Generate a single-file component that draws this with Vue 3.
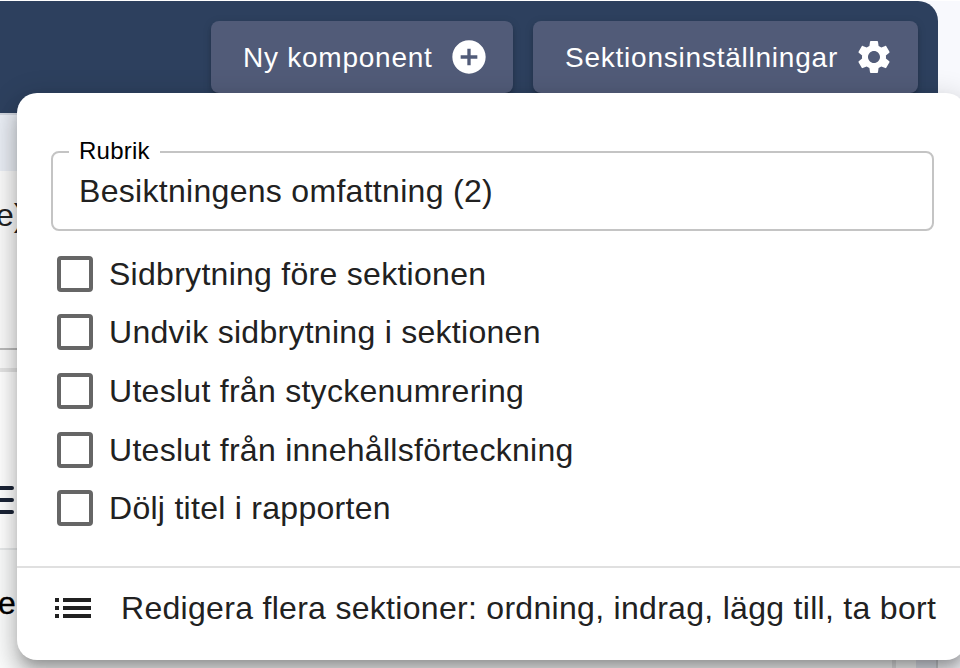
<script setup>
import { ref } from 'vue'

const title = ref('Besiktningens omfattning (2)')
const options = ref([
  { key: 'break', label: 'Sidbrytning före sektionen', checked: false },
  { key: 'avoid', label: 'Undvik sidbrytning i sektionen', checked: false },
  { key: 'numbering', label: 'Uteslut från styckenumrering', checked: false },
  { key: 'toc', label: 'Uteslut från innehållsförteckning', checked: false },
  { key: 'hide', label: 'Dölj titel i rapporten', checked: false },
])
</script>

<template>
  <div class="page">
    <div class="section">
      <header class="toolbar">
        <button class="tool add">
          <span>Ny komponent</span>
          <svg viewBox="0 0 24 24"><path d="M12 2C6.48 2 2 6.48 2 12s4.48 10 10 10 10-4.48 10-10S17.52 2 12 2m5 11h-4v4h-2v-4H7v-2h4V7h2v4h4z" /></svg>
        </button>
        <button class="tool settings">
          <span>Sektionsinställningar</span>
          <svg viewBox="0 0 24 24"><path d="M19.14 12.94c.04-.3.06-.61.06-.94 0-.32-.02-.64-.07-.94l2.03-1.58c.18-.14.23-.41.12-.61l-1.92-3.32c-.12-.22-.37-.29-.59-.22l-2.39.96c-.5-.38-1.03-.7-1.62-.94l-.36-2.54c-.04-.24-.24-.41-.48-.41h-3.84c-.24 0-.43.17-.47.41l-.36 2.54c-.59.24-1.13.57-1.62.94l-2.39-.96c-.22-.08-.47 0-.59.22L2.74 8.87c-.12.21-.08.47.12.61l2.03 1.58c-.05.3-.09.63-.09.94s.02.64.07.94l-2.03 1.58c-.18.14-.23.41-.12.61l1.92 3.32c.12.22.37.29.59.22l2.39-.96c.5.38 1.03.7 1.62.94l.36 2.54c.05.24.24.41.48.41h3.84c.24 0 .44-.17.47-.41l.36-2.54c.59-.24 1.13-.56 1.62-.94l2.39.96c.22.08.47 0 .59-.22l1.92-3.32c.12-.22.07-.47-.12-.61zM12 15.6c-1.98 0-3.6-1.62-3.6-3.6s1.62-3.6 3.6-3.6 3.6 1.62 3.6 3.6-1.62 3.6-3.6 3.6" /></svg>
        </button>
      </header>
      <div class="gap-strip"></div>
      <div class="filled-field">e)</div>
      <div class="field-foot"></div>
      <div class="editor">
        <svg class="menu-lines" viewBox="0 0 24 28"><path d="M0 2h22M0 14h22M0 26h22" /></svg>
      </div>
      <div class="content"><span>e</span><i class="content-edge"></i></div>
    </div>
    <div class="gutter"></div>

    <div class="popover">
      <div class="form">
        <fieldset class="field">
          <legend>Rubrik</legend>
          <div class="value">{{ title }}</div>
        </fieldset>
        <div class="options">
          <label v-for="o in options" :key="o.key" class="option" @click="o.checked = !o.checked">
            <span class="box"></span>
            <span class="label">{{ o.label }}</span>
          </label>
        </div>
      </div>
      <div class="action">
        <svg viewBox="0 0 24 24"><path d="M3 7h2v2H3zm0 4h2v2H3zm0 4h2v2H3zM7 7h14v2H7zm0 4h14v2H7zm0 4h14v2H7z" /></svg>
        <span>Redigera flera sektioner: ordning, indrag, lägg till, ta bort</span>
      </div>
    </div>
  </div>
</template>

<style>
body { margin: 0; overflow: hidden; background: #fff; }
</style>

<style scoped>
* { box-sizing: border-box; }
.page {
  position: relative;
  display: flex;
  width: 960px;
  height: 668px;
  padding-top: 1px;
  overflow: hidden;
  background: linear-gradient(#fff 0 1px, #f8f9fd 1px);
  font-family: "Liberation Sans", Arial, sans-serif;
  font-size: 32px;
  color: #212121;
}
.section { display: flex; flex-direction: column; width: 938px; height: 667px; }
.toolbar {
  display: flex;
  flex: none;
  justify-content: flex-end;
  gap: 20px;
  height: 112px;
  padding: 20px 20px 0;
  background: #2d405e;
  border-radius: 0 20px 0 0;
}
.tool {
  display: flex;
  align-items: center;
  justify-content: space-between;
  height: 72px;
  padding: 0 24px 0 32px;
  border: 0;
  border-radius: 8px;
  background: #515b78;
  color: #fff;
  font: 28px/40px "Liberation Sans", Arial, sans-serif;
  white-space: nowrap;
  box-shadow: 0 6px 2px -4px rgba(0,0,0,.2), 0 4px 4px rgba(0,0,0,.14), 0 2px 10px rgba(0,0,0,.12);
}
.tool span { padding-top: 2px; }
.add { width: 302px; letter-spacing: .76px; }
.settings { width: 385px; letter-spacing: .77px; }
.tool svg { flex: none; width: 40px; height: 40px; fill: currentColor; }
.gap-strip { flex: none; height: 58px; border-top: 2px solid #d0d5de; background: #e9edf4; }
.filled-field {
  flex: none;
  height: 179px;
  padding-top: 26px;
  border-bottom: 2px solid #bababa;
  background: #fafafa;
  line-height: 36px;
  text-indent: -4px;
}
.field-foot { flex: none; height: 22px; border-bottom: 4px solid #e4e4e4; background: #fafafa; }
.editor { flex: none; height: 176px; padding-top: 114px; background: #fff; }
.menu-lines {
  display: block;
  width: 24px;
  height: 28px;
  margin-left: -10px;
  fill: none;
  stroke: #1b2436;
  stroke-width: 4;
  stroke-linecap: round;
}
.content {
  display: flex;
  flex: 1;
  justify-content: space-between;
  padding: 35px 22px 0 0;
  border-top: 2px solid #e7e9ea;
  background: linear-gradient(90deg, #fafbfb 0 916px, #e2e5ee 916px 936px, #ccced3 936px);
  color: #000;
  line-height: 36px;
  text-indent: -2px;
}
.content span { -webkit-text-stroke: .3px #000; }
.content-edge { align-self: stretch; width: 4px; margin-right: 20px; background: #e3e4e5; }
.gutter { flex: 1; }

.popover {
  position: absolute;
  top: 93px;
  left: 17px;
  width: 949px;
  height: 567px;
  border-radius: 20px;
  background: #fff;
  box-shadow: 0 10px 12px -6px rgba(0,0,0,.22), 0 16px 20px 2px rgba(0,0,0,.16), 0 6px 28px 4px rgba(0,0,0,.14);
}
.form { height: 473px; padding: 45px 32px 0 34px; }
.field {
  width: 883px;
  height: 93px;
  margin: 0;
  padding: 0 26px;
  border: 2px solid #c4c4c4;
  border-radius: 8px;
}
.field legend {
  height: 28px;
  margin-left: -10px;
  padding: 0 10px;
  color: #000;
  font-size: 24px;
  line-height: 26px;
  letter-spacing: .25px;
}
.value { padding-top: 7px; line-height: 36px; letter-spacing: .3px; white-space: nowrap; }
.options { padding: 13.5px 0 0 6px; }
.option { display: flex; align-items: center; gap: 16px; height: 58.6px; letter-spacing: .28px; white-space: nowrap; }
.label { padding-top: 1px; }
.box { flex: none; width: 36px; height: 36px; border: 4px solid #666; border-radius: 4px; }
.action {
  display: flex;
  align-items: center;
  gap: 24px;
  height: 94px;
  padding: 0 0 12px 32px;
  border-top: 2px solid #e0e0e0;
  letter-spacing: .3px;
  white-space: nowrap;
}
.action svg { flex: none; width: 48px; height: 48px; fill: #212121; }
</style>
